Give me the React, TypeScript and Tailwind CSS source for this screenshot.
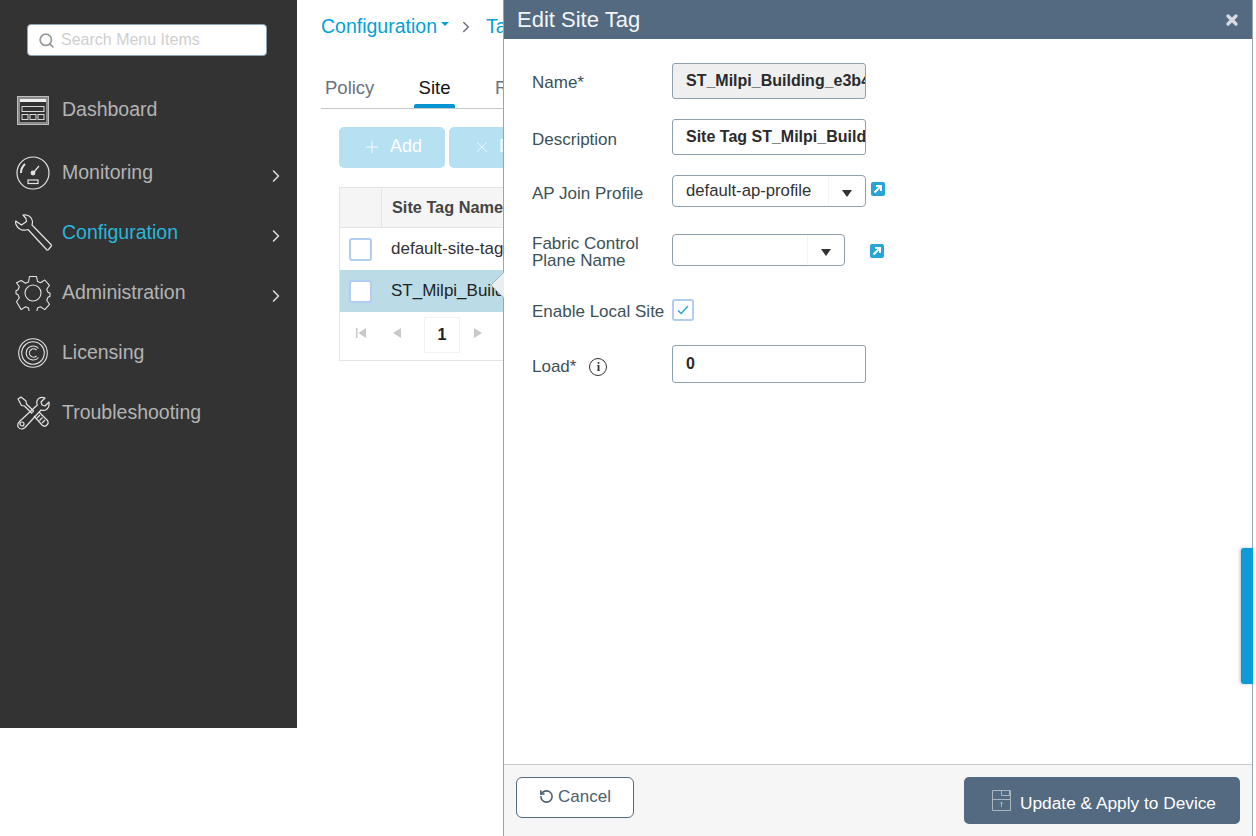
import React from 'react';
import { ChevronRight, Search, Plus, X, RotateCcw } from 'lucide-react';

const font = { fontFamily: '"Liberation Sans", Arial, sans-serif' };

function DashboardIcon() {
  return (
    <svg width="32" height="29" viewBox="0 0 32 29" fill="none" stroke="#d8d8d8">
      <rect x="0.5" y="0.5" width="31" height="28" fill="#8a8a8a" stroke="#bdbdbd" />
      <rect x="3" y="5" width="26" height="21" fill="#333" stroke="none" />
      <rect x="3" y="3" width="26" height="3" fill="#eee" stroke="none" />
      <rect x="5" y="10.5" width="22" height="5" />
      <rect x="5" y="18.5" width="6" height="5" />
      <rect x="13" y="18.5" width="6" height="5" />
      <rect x="21" y="18.5" width="6" height="5" />
    </svg>
  );
}

function MonitoringIcon() {
  return (
    <svg width="34" height="34" viewBox="0 0 34 34" fill="none" stroke="#e4e4e4" strokeWidth="1.2">
      <circle cx="17" cy="17" r="16" />
      <path d="M5 17a12 12 0 0 1 4-9" strokeWidth="2" />
      <circle cx="17" cy="17" r="1.800" fill="#e4e4e4" />
      <path d="M18 16l5-6" />
      <rect x="12" y="24" width="10" height="3.500" />
    </svg>
  );
}

function WrenchIcon() {
  return (
    <svg width="37" height="38" viewBox="0 0 37 38" fill="none" stroke="#e4e4e4" strokeWidth="1.2" strokeLinejoin="round">
      <path d="M8 1c5-1 9 2 9.500 6.500 0 1.500-.2 2.500-.5 3.500l19 19.500c.6.700.6 1.300 0 2l-2.500 3c-.7.700-1.300.7-2 0L13 15.500c-5 2-10.500-.5-12-5-.4-1.200-.5-2.500-.3-3.500l5.800 4 5-3.500L11 4.500z" />
    </svg>
  );
}

function GearIcon() {
  return (
    <svg width="36" height="36" viewBox="0 0 36 36" fill="none" stroke="#e4e4e4" strokeWidth="1.1" strokeLinejoin="round">
      <circle cx="18" cy="18" r="8" />
      <path d="M14.500 1h7l1 5 3 1.300 4.300-2.800 4.700 5.300-2.800 4 1.300 3 2 1v3l-2 1-1.300 3 2.800 4-4.700 5.300-4.300-2.800-3 1.300-1 5h-7l-1-5-3-1.300-4.300 2.800L1.500 26.300l2.800-4L3 19.300l-2-1v-3l2-1 1.300-3-2.800-4L6.200 5l4.300 2.800 3-1.300z" transform="translate(0 .5)" />
    </svg>
  );
}

function LicenseIcon() {
  return (
    <svg width="30" height="30" viewBox="0 0 30 30" fill="none" stroke="#e4e4e4" strokeWidth="1.1">
      <circle cx="15" cy="15" r="14.300" />
      <circle cx="15" cy="15" r="11.300" />
      <path d="M20.500 10.500a7 7 0 1 0 0 9" />
      <path d="M18.500 12a4.200 4.200 0 1 0 0 6" />
    </svg>
  );
}

function ToolsIcon() {
  return (
    <svg width="34" height="34" viewBox="0 0 34 34" fill="none" stroke="#e4e4e4" strokeWidth="1.2" strokeLinejoin="round">
      <path d="M2 3l3-2 5 4 .5 3 7 7-2 2-7-7-3-.5z" />
      <path d="M33 6l-4 4-3-1-1-3 4-4c-3-1.500-7-.5-8 3-.4 1.500-.2 3 .3 4L4 25c-2.500 2.500-3 4.500-1.500 6.500S7 33.500 9 31.500L25 14c3 1 6 0 7.500-3 .5-1.500.8-3.500.5-5z" />
      <circle cx="6" cy="28" r="2" />
      <path d="M18 20l8 9c1.500 1.500 3.500 1.500 5 0s1.500-3 .5-4.500L23 16" />
      <path d="M21 22l3-3M23.500 24.500l3-3M26 27l3-3" />
    </svg>
  );
}

function OpenLink() {
  return (
    <span className="flex h-[14px] w-[14px] items-center justify-center rounded-[2px] bg-[#27a5d8]">
      <svg width="10" height="10" viewBox="0 0 10 10" fill="none" stroke="white" strokeWidth="2">
        <path d="M1.500 8.500l5.500-5.500M3 2h5v5" />
      </svg>
    </span>
  );
}

function SaveIcon() {
  return (
    <svg width="19" height="21" viewBox="0 0 19 21" fill="none" stroke="#a9b6c2" strokeWidth="1">
      <path d="M.5.500h18v20H.5z" />
      <path d="M9.500.500v5h8v-5M.5 9.500h18" />
      <path d="M9.500 17v-5M8 13.500l1.500-1.500 1.500 1.500" />
    </svg>
  );
}

const navItems = [
  { label: 'Dashboard', icon: <DashboardIcon />, chevron: false, active: false, gap: 'mb-[3px]' },
  { label: 'Monitoring', icon: <MonitoringIcon />, chevron: true, active: false, gap: '' },
  { label: 'Configuration', icon: <WrenchIcon />, chevron: true, active: true, gap: '' },
  { label: 'Administration', icon: <GearIcon />, chevron: true, active: false, gap: '' },
  { label: 'Licensing', icon: <LicenseIcon />, chevron: false, active: false, gap: '' },
  { label: 'Troubleshooting', icon: <ToolsIcon />, chevron: false, active: false, gap: '' },
];

function Sidebar() {
  return (
    <aside className="h-[728px] w-[297px] shrink-0 bg-[#333333] pt-[24px]">
      <div className="mx-[27px] flex h-[32px] w-[240px] items-center gap-[6px] rounded-[4px] border border-[#8fa3b3] bg-white pl-[10px]">
        <Search size={17} strokeWidth={2.5} className="text-[#9a9a9a]" />
        <span className="text-[16px] text-[#cfcfcf]">Search Menu Items</span>
      </div>
      <nav className="mt-[24px]">
        {navItems.map((item) => (
          <div key={item.label} className={`flex h-[60px] items-center pr-[11px] ${item.gap}`}>
            <div className="flex w-[62px] shrink-0 justify-center pl-[4px]">{item.icon}</div>
            <span className={`flex-1 text-[19.500px] ${item.active ? 'text-[#29b6dc]' : 'text-[#b4b4b4]'}`}>{item.label}</span>
            {item.chevron && <ChevronRight size={20} strokeWidth={1.8} className="mt-[6px] text-[#e0e0e0]" />}
          </div>
        ))}
      </nav>
    </aside>
  );
}

function Background() {
  return (
    <main className="w-[206px] shrink-0 overflow-hidden pl-[24px]">
      <div className="flex h-[52px] w-[300px] items-center pt-[1px] text-[19.500px] text-[#049fd9]">
        <span>Configuration</span>
        <span className="mb-[6px] ml-[4px] h-0 w-0 border-x-[4px] border-t-[4px] border-x-transparent border-t-[#049fd9]" />
        <ChevronRight size={18} className="ml-[8px] text-[#6b7280]" />
        <span className="ml-[11px]">Tags</span>
      </div>
      <div className="flex h-[57px] w-[900px] items-end border-b border-[#c4c7cc] text-[18.500px]">
        <span className="mb-[6px] ml-[4px] w-[89px] text-[#6b7280]">Policy</span>
        <span className="relative flex h-[34px] w-[41px] items-start justify-center text-[#111]">
          Site
          <span className="absolute bottom-0 left-0 right-0 h-[4px] rounded-t-[2px] bg-[#0792d0]" />
        </span>
        <span className="mb-[6px] ml-[40px] text-[#6b7280]">RF</span>
      </div>
      <div className="ml-[18px] mt-[18px] flex w-[400px] gap-[4px]">
        <button className="flex h-[41px] w-[106px] items-center justify-center gap-[8px] rounded-[5px] bg-[#b6e1f2] pb-[2px] text-[18px] text-white">
          <Plus size={20} strokeWidth={1} />
          Add
        </button>
        <button className="flex h-[41px] w-[120px] items-center justify-start gap-[8px] rounded-[5px] bg-[#b6e1f2] pb-[2px] pl-[24px] text-[18px] text-white">
          <X size={18} strokeWidth={1} />
          Delete
        </button>
      </div>
      <div className="ml-[18px] mt-[19px] w-[700px] border border-[#e4e4e4] text-[17px]">
        <div className="flex h-[40px] border-b border-[#e4e4e4] bg-[#f5f5f5]">
          <div className="w-[42px] border-r border-[#e4e4e4]" />
          <div className="flex items-center pl-[10px] text-[16.300px] font-bold text-[#444]">Site Tag Name</div>
        </div>
        <div className="flex h-[42px] items-center">
          <div className="flex w-[42px] justify-center pr-[2px]">
            <span className="h-[23px] w-[23px] rounded-[3px] border-2 border-[#b3ccf2] bg-white" />
          </div>
          <span className="pl-[9px] text-[#333]">default-site-tag</span>
        </div>
        <div className="flex h-[42px] items-center bg-[#bbdce7]">
          <div className="flex w-[42px] justify-center pr-[2px]">
            <span className="h-[23px] w-[23px] rounded-[3px] border-2 border-[#b3ccf2] bg-white" />
          </div>
          <span className="pl-[9px] text-[#222]">ST_Milpi_Building</span>
        </div>
        <div className="flex h-[48px] items-start">
          <div className="flex h-[42px] items-center pl-[16px] text-[#c9c9c9]">
            <svg width="10" height="10" viewBox="0 0 10 10" fill="currentColor">
              <path d="M0 0h1.500v10H0zM10 0v10L2.500 5z" />
            </svg>
            <svg width="8" height="10" viewBox="0 0 8 10" fill="currentColor" className="ml-[27px]">
              <path d="M8 0v10L0 5z" />
            </svg>
            <span className="ml-[23px] mt-[4px] flex h-[36px] w-[36px] items-center justify-center border border-[#f2f2f2] text-[16px] font-bold text-[#222]">1</span>
            <svg width="8" height="10" viewBox="0 0 8 10" fill="currentColor" className="ml-[14px]">
              <path d="M0 0v10l8-5z" />
            </svg>
          </div>
        </div>
      </div>
    </main>
  );
}

function Label({ children, className = '' }: { children: React.ReactNode; className?: string }) {
  return <label className={`w-[140px] shrink-0 text-[17px] leading-[17px] text-[#3c5158] ${className}`}>{children}</label>;
}

const inputCls = 'h-full rounded-[3px] border border-[#8ea0ac] pl-[13px] text-[16px] font-bold text-[#2b2b2b] outline-none';

function SelectBox({ value, width }: { value: string; width: string }) {
  return (
    <div className={`flex h-[32px] items-center rounded-[4px] border border-[#8ea0ac] bg-white ${width}`}>
      <span className="flex-1 pl-[13px] text-[16.700px] text-[#333]">{value}</span>
      <span className="flex h-full w-[37px] items-center justify-center border-l border-[#f4f4f4] pt-[5px]">
        <span className="h-0 w-0 border-x-[5px] border-t-[7px] border-x-transparent border-t-[#333]" />
      </span>
    </div>
  );
}

function Drawer() {
  return (
    <section className="absolute left-[503px] top-0 flex h-[836px] w-[750px] flex-col border-x border-[#98a4ae] bg-white">
      <header className="flex h-[39px] shrink-0 items-center justify-between bg-[#546a80] pl-[13px] pr-[12px] text-[22px] text-[#f3f5f7]">
        <span>Edit Site Tag</span>
        <X size={16} strokeWidth={5} className="text-[#d5dce2]" />
      </header>
      <div className="flex-1 pl-[28px] pt-[24px]">
        <div className="flex h-[36px] items-center">
          <Label className="mt-[2px]">Name*</Label>
          <input readOnly value="ST_Milpi_Building_e3b4c5d6" className={`${inputCls} w-[194px] bg-[#efefef]`} />
        </div>
        <div className="mt-[20px] flex h-[36px] items-center">
          <Label className="mt-[4px]">Description</Label>
          <input readOnly value="Site Tag ST_Milpi_Building_e3b4" className={`${inputCls} w-[194px] bg-white`} />
        </div>
        <div className="mt-[20px] flex h-[32px] items-center">
          <Label className="mt-[4px]">AP Join Profile</Label>
          <SelectBox value="default-ap-profile" width="w-[194px]" />
          <span className="mb-[4px] ml-[5px]">
            <OpenLink />
          </span>
        </div>
        <div className="mt-[27px] flex h-[32px] items-center">
          <Label className="mt-[3px]">
            Fabric Control
            <br />
            Plane Name
          </Label>
          <SelectBox value="" width="w-[173px]" />
          <span className="ml-[25px] mt-[2px]">
            <OpenLink />
          </span>
        </div>
        <div className="mt-[33px] flex h-[22px] items-center">
          <Label className="mt-[2px]">Enable Local Site</Label>
          <span className="flex h-[22px] w-[22px] items-center justify-center rounded-[3px] border-2 border-[#b3ccf2] bg-white">
            <svg width="12" height="10" viewBox="0 0 12 10" fill="none" stroke="#2a9fd6" strokeWidth="1.300">
              <path d="M1 5.500l3.200 3L11 1" />
            </svg>
          </span>
        </div>
        <div className="mt-[24px] flex h-[38px] items-center">
          <Label className="mt-[5px] flex items-center">
            Load*
            <span className="ml-[13px] flex h-[18px] w-[18px] items-center justify-center rounded-full border-[1.500px] border-[#333] text-[12px] font-bold leading-none text-[#333]" style={{ fontFamily: '"Liberation Serif", serif' }}>
              i
            </span>
          </Label>
          <input readOnly value="0" className={`${inputCls} w-[194px] bg-white`} />
        </div>
      </div>
      <footer className="flex h-[72px] shrink-0 items-start justify-between border-t border-[#c6cbd0] bg-[#f6f6f6] px-[12px] pt-[12px]">
        <button className="flex h-[41px] w-[118px] items-center justify-center gap-[4px] rounded-[6px] border border-[#546a80] bg-white pb-[2px] text-[17px] text-[#4b5f70]">
          <RotateCcw size={15} strokeWidth={2.5} />
          Cancel
        </button>
        <button className="flex h-[47px] w-[276px] items-center justify-center gap-[9px] rounded-[5px] bg-[#546a80] pl-[4px] text-[17.300px] text-white">
          <SaveIcon />
          <span className="mt-[6px]">Update &amp; Apply to Device</span>
        </button>
      </footer>
      {/* callout pointing at the selected row */}
      <svg className="absolute left-[-14px] top-[271px]" width="14" height="28" viewBox="0 0 14 28" fill="#e9eef1" stroke="#a8b4bc" strokeWidth="1">
        <path d="M14 1L1 14l13 13" />
      </svg>
      {/* scroll handle on the right edge */}
      <span className="absolute right-[-1px] top-[548px] h-[136px] w-[12px] rounded-l-[3px] bg-[#0b9bd6] shadow-[-1px_0_3px_rgba(80,110,160,0.45)]" />
    </section>
  );
}

export default function App() {
  return (
    <div className="relative flex h-[836px] w-[1256px] overflow-hidden bg-white" style={font}>
      <Sidebar />
      <Background />
      <Drawer />
    </div>
  );
}
